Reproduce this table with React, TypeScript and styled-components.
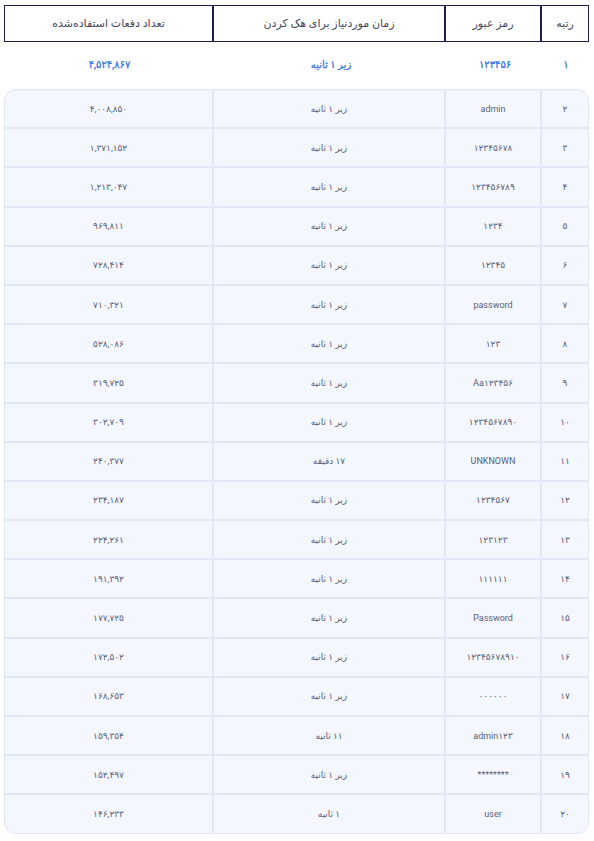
import React from 'react';
import styled, { createGlobalStyle } from 'styled-components';

const fa = (s: string) => s.replace(/[0-9]/g, (d) => '۰۱۲۳۴۵۶۷۸۹'[Number(d)]);

type Row = [number, string, string, string];

const rows: Row[] = [
  [1, '123456', 'زیر 1 ثانیه', '4,524,867'],
  [2, 'admin', 'زیر 1 ثانیه', '4,008,850'],
  [3, '12345678', 'زیر 1 ثانیه', '1,371,152'],
  [4, '123456789', 'زیر 1 ثانیه', '1,213,047'],
  [5, '1234', 'زیر 1 ثانیه', '969,811'],
  [6, '12345', 'زیر 1 ثانیه', '728,414'],
  [7, 'password', 'زیر 1 ثانیه', '710,321'],
  [8, '123', 'زیر 1 ثانیه', '528,086'],
  [9, 'Aa123456', 'زیر 1 ثانیه', '319,725'],
  [10, '1234567890', 'زیر 1 ثانیه', '302,709'],
  [11, 'UNKNOWN', '17 دقیقه', '240,377'],
  [12, '1234567', 'زیر 1 ثانیه', '234,187'],
  [13, '123123', 'زیر 1 ثانیه', '224,261'],
  [14, '111111', 'زیر 1 ثانیه', '191,392'],
  [15, 'Password', 'زیر 1 ثانیه', '177,725'],
  [16, '12345678910', 'زیر 1 ثانیه', '172,502'],
  [17, '000000', 'زیر 1 ثانیه', '168,653'],
  [18, 'admin123', '11 ثانیه', '159,354'],
  [19, '********', 'زیر 1 ثانیه', '152,497'],
  [20, 'user', '1 ثانیه', '146,233'],
];

const cols = '46px 96px 232px 1fr';

const GlobalStyle = createGlobalStyle`
  body {
    margin: 0;
    background: #ffffff;
    font-family: Roboto, "DejaVu Sans", sans-serif;
  }
`;

const Page = styled.div`
  direction: rtl;
  padding: 5px 5px 0 4px;
`;

const HeadRow = styled.div`
  display: grid;
  grid-template-columns: ${cols};
  height: 37px;
  box-sizing: border-box;
  border: 1.5px solid #1b1f4d;
`;

const HeadCell = styled.div`
  display: flex;
  align-items: center;
  justify-content: center;
  font-size: 11px;
  color: #44475a;
  & + & {
    border-right: 2px solid #1b1f4d;
  }
`;

const TopRow = styled.div`
  display: grid;
  grid-template-columns: ${cols};
  height: 40px;
  margin: 2px 0 5px;
`;

const TopCell = styled.div`
  display: flex;
  align-items: center;
  justify-content: center;
  font-size: 10px;
  color: #2f6fe4;
  -webkit-text-stroke: 0.25px #2f6fe4;
`;

const Card = styled.div`
  border: 1px solid #dde6f5;
  border-radius: 12px;
  background: #f4f7fd;
  overflow: hidden;
`;

const BodyRow = styled.div`
  display: grid;
  grid-template-columns: ${cols};
  height: 37.2px;
  & + & {
    border-top: 2px solid #e0e8f7;
  }
`;

const Cell = styled.div`
  display: flex;
  align-items: center;
  justify-content: center;
  font-size: 9px;
  color: #5a6079;
  & + & {
    border-right: 2px solid #e0e8f7;
  }
`;

const App: React.FC = () => {
  const [first, ...rest] = rows;
  return (
    <Page>
      <GlobalStyle />
      <HeadRow>
        <HeadCell>رتبه</HeadCell>
        <HeadCell>رمز عبور</HeadCell>
        <HeadCell>زمان موردنیاز برای هک کردن</HeadCell>
        <HeadCell>تعداد دفعات استفاده‌شده</HeadCell>
      </HeadRow>
      <TopRow>
        <TopCell>{fa(String(first[0]))}</TopCell>
        <TopCell>{fa(first[1])}</TopCell>
        <TopCell>{fa(first[2])}</TopCell>
        <TopCell>{fa(first[3])}</TopCell>
      </TopRow>
      <Card>
        {rest.map(([rank, pass, time, count]) => (
          <BodyRow key={rank}>
            <Cell>{fa(String(rank))}</Cell>
            <Cell>{fa(pass)}</Cell>
            <Cell>{fa(time)}</Cell>
            <Cell>{fa(count)}</Cell>
          </BodyRow>
        ))}
      </Card>
    </Page>
  );
};

export default App;
